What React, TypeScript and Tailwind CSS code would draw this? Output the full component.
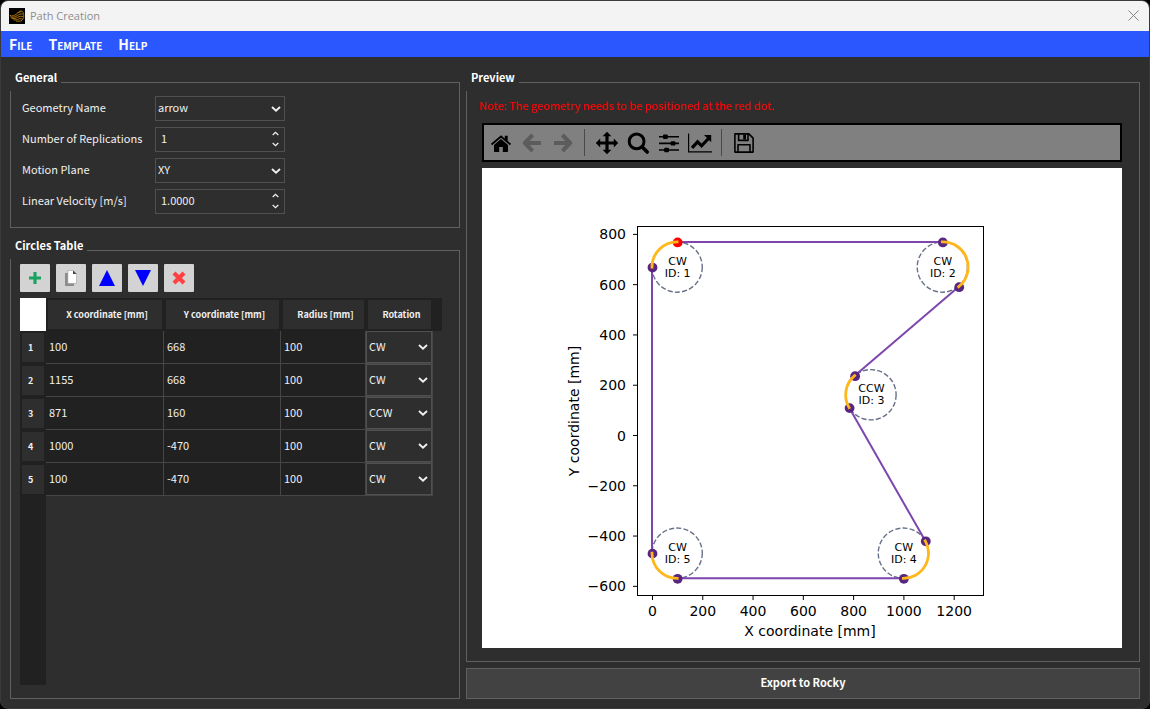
import type { ReactNode } from 'react'

interface Circle {
  id: number
  x: number
  y: number
  radius: number
  rotation: 'CW' | 'CCW'
}

const circles: Circle[] = [
  { id: 1, x: 100, y: 668, radius: 100, rotation: 'CW' },
  { id: 2, x: 1155, y: 668, radius: 100, rotation: 'CW' },
  { id: 3, x: 871, y: 160, radius: 100, rotation: 'CCW' },
  { id: 4, x: 1000, y: -470, radius: 100, rotation: 'CW' },
  { id: 5, x: 100, y: -470, radius: 100, rotation: 'CW' },
]

// entry and exit point of the path on each circle; sweep is the svg arc flag
const arcs = [
  { from: [0, 668], to: [100, 768], sweep: 1 },
  { from: [1155, 768], to: [1220, 590], sweep: 1 },
  { from: [806, 236], to: [784, 109], sweep: 0 },
  { from: [1087, -421], to: [1000, -570], sweep: 1 },
  { from: [100, -570], to: [0, -470], sweep: 1 },
]

const xTicks = [0, 200, 400, 600, 800, 1000, 1200]
const yTicks = [800, 600, 400, 200, 0, -200, -400, -600]

const SCALE = 0.2514
const px = (x: number) => 170.5 + x * SCALE
const py = (y: number) => 267.5 - y * SCALE

function Chevron({ up = false, small = false }: { up?: boolean; small?: boolean }) {
  return (
    <svg
      viewBox="0 0 10 6"
      className={small ? 'h-[5px] w-[7px]' : 'h-[6px] w-[10px]'}
      fill="none"
      stroke="#f0f0f0"
      strokeWidth="1.9"
      aria-hidden="true"
    >
      <path d={up ? 'M1 5 5 1.4 9 5' : 'M1 1 5 4.6 9 1'} />
    </svg>
  )
}

function Group({ title, className, children }: { title: string; className: string; children: ReactNode }) {
  return (
    <fieldset className={`min-w-0 border border-[#606060] ${className}`}>
      <legend className="-ml-px bg-[#2e2e2e] pr-1 pb-[10px] pl-[5px] text-[11px] leading-[8px] font-bold text-white">
        {title}
      </legend>
      {children}
    </fieldset>
  )
}

function SelectRow({ id, label, options }: { id: string; label: string; options: string[] }) {
  return (
    <div className="flex items-center">
      <label htmlFor={id} className="w-[133px] pb-[3px]">
        {label}
      </label>
      <div className="relative h-[25px] w-[130px]">
        <select
          id={id}
          className="h-full w-full appearance-none border border-[#505050] bg-[#2e2e2e] pb-[3px] pl-[2px] outline-none"
        >
          {options.map((o) => (
            <option key={o}>{o}</option>
          ))}
        </select>
        <span className="pointer-events-none absolute inset-y-0 right-1 flex items-center">
          <Chevron />
        </span>
      </div>
    </div>
  )
}

function SpinRow({ id, label, value }: { id: string; label: string; value: string }) {
  return (
    <div className="flex items-center">
      <label htmlFor={id} className="w-[133px] pb-[3px]">
        {label}
      </label>
      <div className="flex h-[25px] w-[130px] border border-[#505050] px-[5px]">
        <input
          id={id}
          type="text"
          defaultValue={value}
          className="min-w-0 flex-1 bg-transparent pb-[3px] outline-none"
        />
        <div className="flex flex-col justify-between pt-[3px] pb-1">
          <button type="button" aria-label="Increase">
            <Chevron up small />
          </button>
          <button type="button" aria-label="Decrease">
            <Chevron small />
          </button>
        </div>
      </div>
    </div>
  )
}

function TableButton({ label, children }: { label: string; children: ReactNode }) {
  return (
    <button
      type="button"
      aria-label={label}
      className="flex h-7 w-[30px] items-center justify-center rounded-[1px] bg-[#d3d3d3]"
    >
      {children}
    </button>
  )
}

function ToolButton({ label, disabled, children }: { label: string; disabled?: boolean; children: ReactNode }) {
  return (
    <button
      type="button"
      aria-label={label}
      disabled={disabled}
      className="flex h-6 w-[31px] items-center justify-center text-black disabled:text-[#5c5c5c]"
    >
      <svg viewBox="0 0 24 24" className="size-6" fill="currentColor">
        {children}
      </svg>
    </button>
  )
}

function Separator() {
  return (
    <span className="flex w-[13px] justify-center">
      <span className="h-[27px] w-px bg-[#4a4a4a]" />
    </span>
  )
}

function PlotToolbar() {
  return (
    <div className="flex h-[39px] items-center border-2 border-black bg-[#808080] pl-px">
      <ToolButton label="Home">
        <path d="M12 4.2 1.9 12.8l1.2 1.4L12 6.7l8.9 7.5 1.2-1.4-3.4-2.9V4.8h-2.9v2.6z" />
        <path d="M12 8 5 13.9v6.3c0 .4.3.7.7.7h4.5v-5h3.6v5h4.5c.4 0 .7-.3.7-.7v-6.3z" />
      </ToolButton>
      <ToolButton label="Back" disabled>
        <path
          d="M12.6 4 4.8 12l7.8 8M5 12h16"
          fill="none"
          stroke="currentColor"
          strokeWidth="4"
          strokeLinejoin="round"
        />
      </ToolButton>
      <ToolButton label="Forward" disabled>
        <path
          d="M11.4 4l7.8 8-7.8 8M19 12H3"
          fill="none"
          stroke="currentColor"
          strokeWidth="4"
          strokeLinejoin="round"
        />
      </ToolButton>
      <Separator />
      <ToolButton label="Pan">
        <path d="M12 .8 7.6 5.2h2.8v5.2H5.2V7.6L.8 12l4.4 4.4v-2.8h5.2v5.2H7.6l4.4 4.4 4.4-4.4h-2.8v-5.2h5.2v2.8l4.4-4.4-4.4-4.4v2.8h-5.2V5.2h2.8z" />
      </ToolButton>
      <ToolButton label="Zoom">
        <circle cx="10.6" cy="10.4" r="7.4" fill="none" stroke="currentColor" strokeWidth="3" />
        <path d="m16.2 16 5 5" fill="none" stroke="currentColor" strokeWidth="3.6" strokeLinecap="round" />
      </ToolButton>
      <ToolButton label="Configure subplots">
        <path d="M2 5h20v1.6H2zM2 11.6h20v1.6H2zM2 18.2h20v1.6H2z" />
        <rect x="6" y="3.6" width="4.8" height="4.4" rx="1" />
        <rect x="13.6" y="10.2" width="4.8" height="4.4" rx="1" />
        <rect x="7.2" y="16.8" width="4.8" height="4.4" rx="1" />
      </ToolButton>
      <ToolButton label="Edit axis">
        <path d="M0 2.4h1.2v17.8H24v1.4H0z" />
        <path d="m4 16.8 5.6-6 4 4L21 7" fill="none" stroke="currentColor" strokeWidth="3.2" />
        <path d="M16 4h7.2v7.2z" />
      </ToolButton>
      <Separator />
      <ToolButton label="Save">
        <path
          d="M2.9 2.9h14l4.2 4.2v14H2.9zM6 21v-7.2h12V21M6.6 3v6.4h9.4V3"
          fill="none"
          stroke="currentColor"
          strokeWidth="1.6"
          strokeLinejoin="round"
        />
        <path d="M11.2 3.6H14v4.8h-2.8z" />
      </ToolButton>
    </div>
  )
}

function Plot() {
  return (
    <svg viewBox="0 0 640 480" className="mt-[6px] block w-full bg-white" fontFamily="DejaVu Sans, sans-serif">
      <g transform="translate(-.5 -.5)" fill="none">
        {circles.map((c) => (
          <circle
            key={c.id}
            cx={px(c.x)}
            cy={py(c.y)}
            r={c.radius * SCALE}
            stroke="#697189"
            strokeWidth="1.4"
            strokeDasharray="5.1 2.2"
          />
        ))}
        {arcs.map((a, i) => {
          // the last circle runs up into the first one
          const next = arcs[(i + 1) % arcs.length]
          return (
            <line
              key={i}
              x1={px(a.to[0])}
              y1={py(a.to[1])}
              x2={px(next.from[0])}
              y2={py(next.from[1])}
              stroke="#7d46ae"
              strokeWidth="2"
            />
          )
        })}
      </g>
      {arcs.map((a, i) => (
        <g key={i} fill="#58267f">
          <circle cx={px(a.from[0])} cy={py(a.from[1])} r="4.9" />
          <circle cx={px(a.to[0])} cy={py(a.to[1])} r="4.9" fill={i === 0 ? '#ff0000' : '#58267f'} />
        </g>
      ))}
      <g transform="translate(-.5 -.5)" fill="none">
        {arcs.map((a, i) => (
          <path
            key={i}
            d={`M${px(a.from[0])} ${py(a.from[1])}A25.14 25.14 0 0 ${a.sweep} ${px(a.to[0])} ${py(a.to[1])}`}
            stroke="#ffb71b"
            strokeWidth="2.8"
            strokeLinecap="square"
          />
        ))}
      </g>
      <g fontSize="11" textAnchor="middle">
        {circles.map((c) => (
          <text key={c.id} y={py(c.y) - 3}>
            <tspan x={px(c.x)}>{c.rotation}</tspan>
            <tspan x={px(c.x)} dy="12">{`ID: ${c.id}`}</tspan>
          </text>
        ))}
      </g>
      <rect x="155.5" y="58.5" width="346" height="369" fill="none" stroke="#000" />
      <g fontSize="14">
        {xTicks.map((t) => (
          <g key={t}>
            <line x1={px(t)} y1="428" x2={px(t)} y2="432" stroke="#000" />
            <text x={px(t)} y="448" textAnchor="middle">
              {t}
            </text>
          </g>
        ))}
        {yTicks.map((t) => (
          <g key={t}>
            <line x1="151" y1={py(t)} x2="155" y2={py(t)} stroke="#000" />
            <text x="144" y={py(t) + 5} textAnchor="end">
              {t < 0 ? `−${-t}` : t}
            </text>
          </g>
        ))}
        <text x="328" y="468" textAnchor="middle">
          X coordinate [mm]
        </text>
        <text transform="translate(97 243) rotate(-90)" textAnchor="middle">
          Y coordinate [mm]
        </text>
      </g>
    </svg>
  )
}

function CirclesTable() {
  const head = 'h-[33px] bg-[#212121] p-[2px] text-[9px]'
  const cell = 'h-[33px] border-r border-b border-[#464646] bg-[#212121] pb-[2px] pl-[3px]'

  return (
    <table className="mt-[6px] w-[422px] table-fixed border-separate border-spacing-0 text-left">
      <colgroup>
        <col className="w-[26px]" />
        <col className="w-[118px]" />
        <col className="w-[117px]" />
        <col className="w-[85px]" />
        <col className="w-[67px]" />
        <col className="w-[9px]" />
      </colgroup>
      <thead>
        <tr>
          <td className="bg-white" />
          {['X coordinate [mm]', 'Y coordinate [mm]', 'Radius [mm]', 'Rotation'].map((h) => (
            <th key={h} scope="col" className={head}>
              <div className="flex h-full items-center justify-center bg-[#2e2e2e] pl-1">{h}</div>
            </th>
          ))}
          <td className="bg-[#212121]" />
        </tr>
      </thead>
      <tbody>
        {circles.map((c) => (
          <tr key={c.id}>
            <th scope="row" className={head}>
              <div className="flex h-full items-center bg-[#2e2e2e] pl-[6px]">{c.id}</div>
            </th>
            <td className={cell}>{c.x}</td>
            <td className={cell}>{c.y}</td>
            <td className={cell}>{c.radius}</td>
            <td className="h-[33px] border-r border-b border-[#464646] p-0">
              <div className="relative h-8">
                <select
                  aria-label={`Rotation of circle ${c.id}`}
                  defaultValue={c.rotation}
                  className="h-full w-full appearance-none border border-[#505050] bg-[#2e2e2e] pb-[2px] pl-[2px] outline-none"
                >
                  <option>CW</option>
                  <option>CCW</option>
                </select>
                <span className="pointer-events-none absolute inset-y-0 right-1 flex items-center">
                  <Chevron />
                </span>
              </div>
            </td>
          </tr>
        ))}
      </tbody>
    </table>
  )
}

export default function App() {
  return (
    <div className="min-h-screen bg-black">
      <div className="flex min-h-screen flex-col overflow-hidden rounded-lg border border-[#3a3a3a] bg-[#2e2e2e] font-['Noto_Sans_CJK_SC',sans-serif] text-[11px] leading-[18px] text-[#f0f0f0]">
        <header className="flex h-[30px] items-center bg-[#f3f3f3] pr-[10px] pl-2">
          <svg viewBox="0 0 16 16" className="size-4 bg-black" fill="none" stroke="#c8860f" aria-hidden="true">
            <path
              d="M.8 7.2c2.2 1.6 4.4.6 6.4-1 2-1.6 3.4-2.6 5.2-2.6M1.2 8.8c2.6 1.2 5 .2 7-1.2 1.8-1.2 3.6-2 5.6-1.6M2.6 10.4c2.4.6 4.4-.2 6.2-1.2 1.8-1 3.6-1.2 5.4-.6M4.4 11.8c2 .4 3.8-.2 5.4-.8 1.4-.6 2.8-.4 4 0M7 13c2 .4 4 .2 6-.4"
              strokeWidth=".9"
            />
            <path d="M8.6 5c1.2-1.4 2.6-2.2 4-2 1.2.4 2.2 2.4 2.2 5 0 2-.8 3.6-2.4 4.6" strokeWidth=".8" />
          </svg>
          <h1 className="ml-[5px] flex-1 font-['Open_Sans',sans-serif] text-[11px] text-[#8e8e8e]">Path Creation</h1>
          <button type="button" aria-label="Close" className="pb-[2px]">
            <svg viewBox="0 0 11 11" className="size-[11px]" stroke="#858585" strokeWidth="1">
              <path d="M.5.5l10 10M10.5.5l-10 10" />
            </svg>
          </button>
        </header>

        <nav className="flex h-[26px] items-center gap-4 bg-[#2b57ff] px-2 text-[14px] font-bold text-white [font-variant:small-caps]">
          <a href="#file">File</a>
          <a href="#template">Template</a>
          <a href="#help">Help</a>
        </nav>

        <main className="grid flex-1 grid-cols-[450px_minmax(0,1fr)] gap-[6px] px-[9px] pt-4 pb-[9px]">
          <div className="flex flex-col gap-[13px]">
            <Group title="General" className="pb-[13px]">
              <div className="flex flex-col gap-[6px] px-[11px] pt-[5px]">
                <SelectRow id="geometry" label="Geometry Name" options={['arrow']} />
                <SpinRow id="replications" label="Number of Replications" value="1" />
                <SelectRow id="plane" label="Motion Plane" options={['XY', 'XZ', 'YZ']} />
                <SpinRow id="velocity" label="Linear Velocity [m/s]" value="1.0000" />
              </div>
            </Group>

            <Group title="Circles Table" className="flex flex-1 flex-col pb-[13px]">
              <div className="flex flex-1 flex-col pt-[5px] pl-[9px]">
                <div className="flex gap-[6px]">
                  <TableButton label="Add circle">
                    <svg viewBox="0 0 12 12" className="size-3" fill="#1aa260">
                      <path d="M4.4 0h3.2v4.4H12v3.2H7.6V12H4.4V7.6H0V4.4h4.4z" />
                    </svg>
                  </TableButton>
                  <TableButton label="Duplicate circle">
                    <svg viewBox="0 0 12 16" className="h-4 w-3">
                      <path d="M0 3h9v13H0z" fill="#8c8c8c" />
                      <path d="M2.8.4H8L11.6 4v9.4H2.8z" fill="#fff" stroke="#888" strokeWidth=".5" />
                      <path d="M8 .4V4h3.6z" fill="#444" />
                    </svg>
                  </TableButton>
                  <TableButton label="Move up">
                    <svg viewBox="0 0 16 16" className="size-4" fill="#0000ff">
                      <path d="M8 0l8 16H0z" />
                    </svg>
                  </TableButton>
                  <TableButton label="Move down">
                    <svg viewBox="0 0 16 16" className="size-4" fill="#0000ff">
                      <path d="M0 0h16L8 16z" />
                    </svg>
                  </TableButton>
                  <TableButton label="Delete circle">
                    <svg viewBox="0 0 14 14" className="size-[14px]" stroke="#ff4040" strokeWidth="4.2">
                      <path d="M2 2l10 10M12 2L2 12" />
                    </svg>
                  </TableButton>
                </div>
                <CirclesTable />
                <div className="w-[26px] flex-1 bg-[#212121]" />
              </div>
            </Group>
          </div>

          <div className="flex flex-col gap-[6px]">
            <Group title="Preview" className="flex-1 pb-[13px]">
              <div className="pr-[17px] pl-[15px]">
                <p className="-ml-[3px] pt-[5px] pb-[9px] text-[#ff0000]">
                  Note: The geometry needs to be positioned at the red dot.
                </p>
                <PlotToolbar />
                <Plot />
              </div>
            </Group>
            <button
              type="button"
              className="h-[31px] border border-[#606060] bg-[#424242] pb-[3px] text-[11px] font-bold text-white"
            >
              Export to Rocky
            </button>
          </div>
        </main>
      </div>
    </div>
  )
}
